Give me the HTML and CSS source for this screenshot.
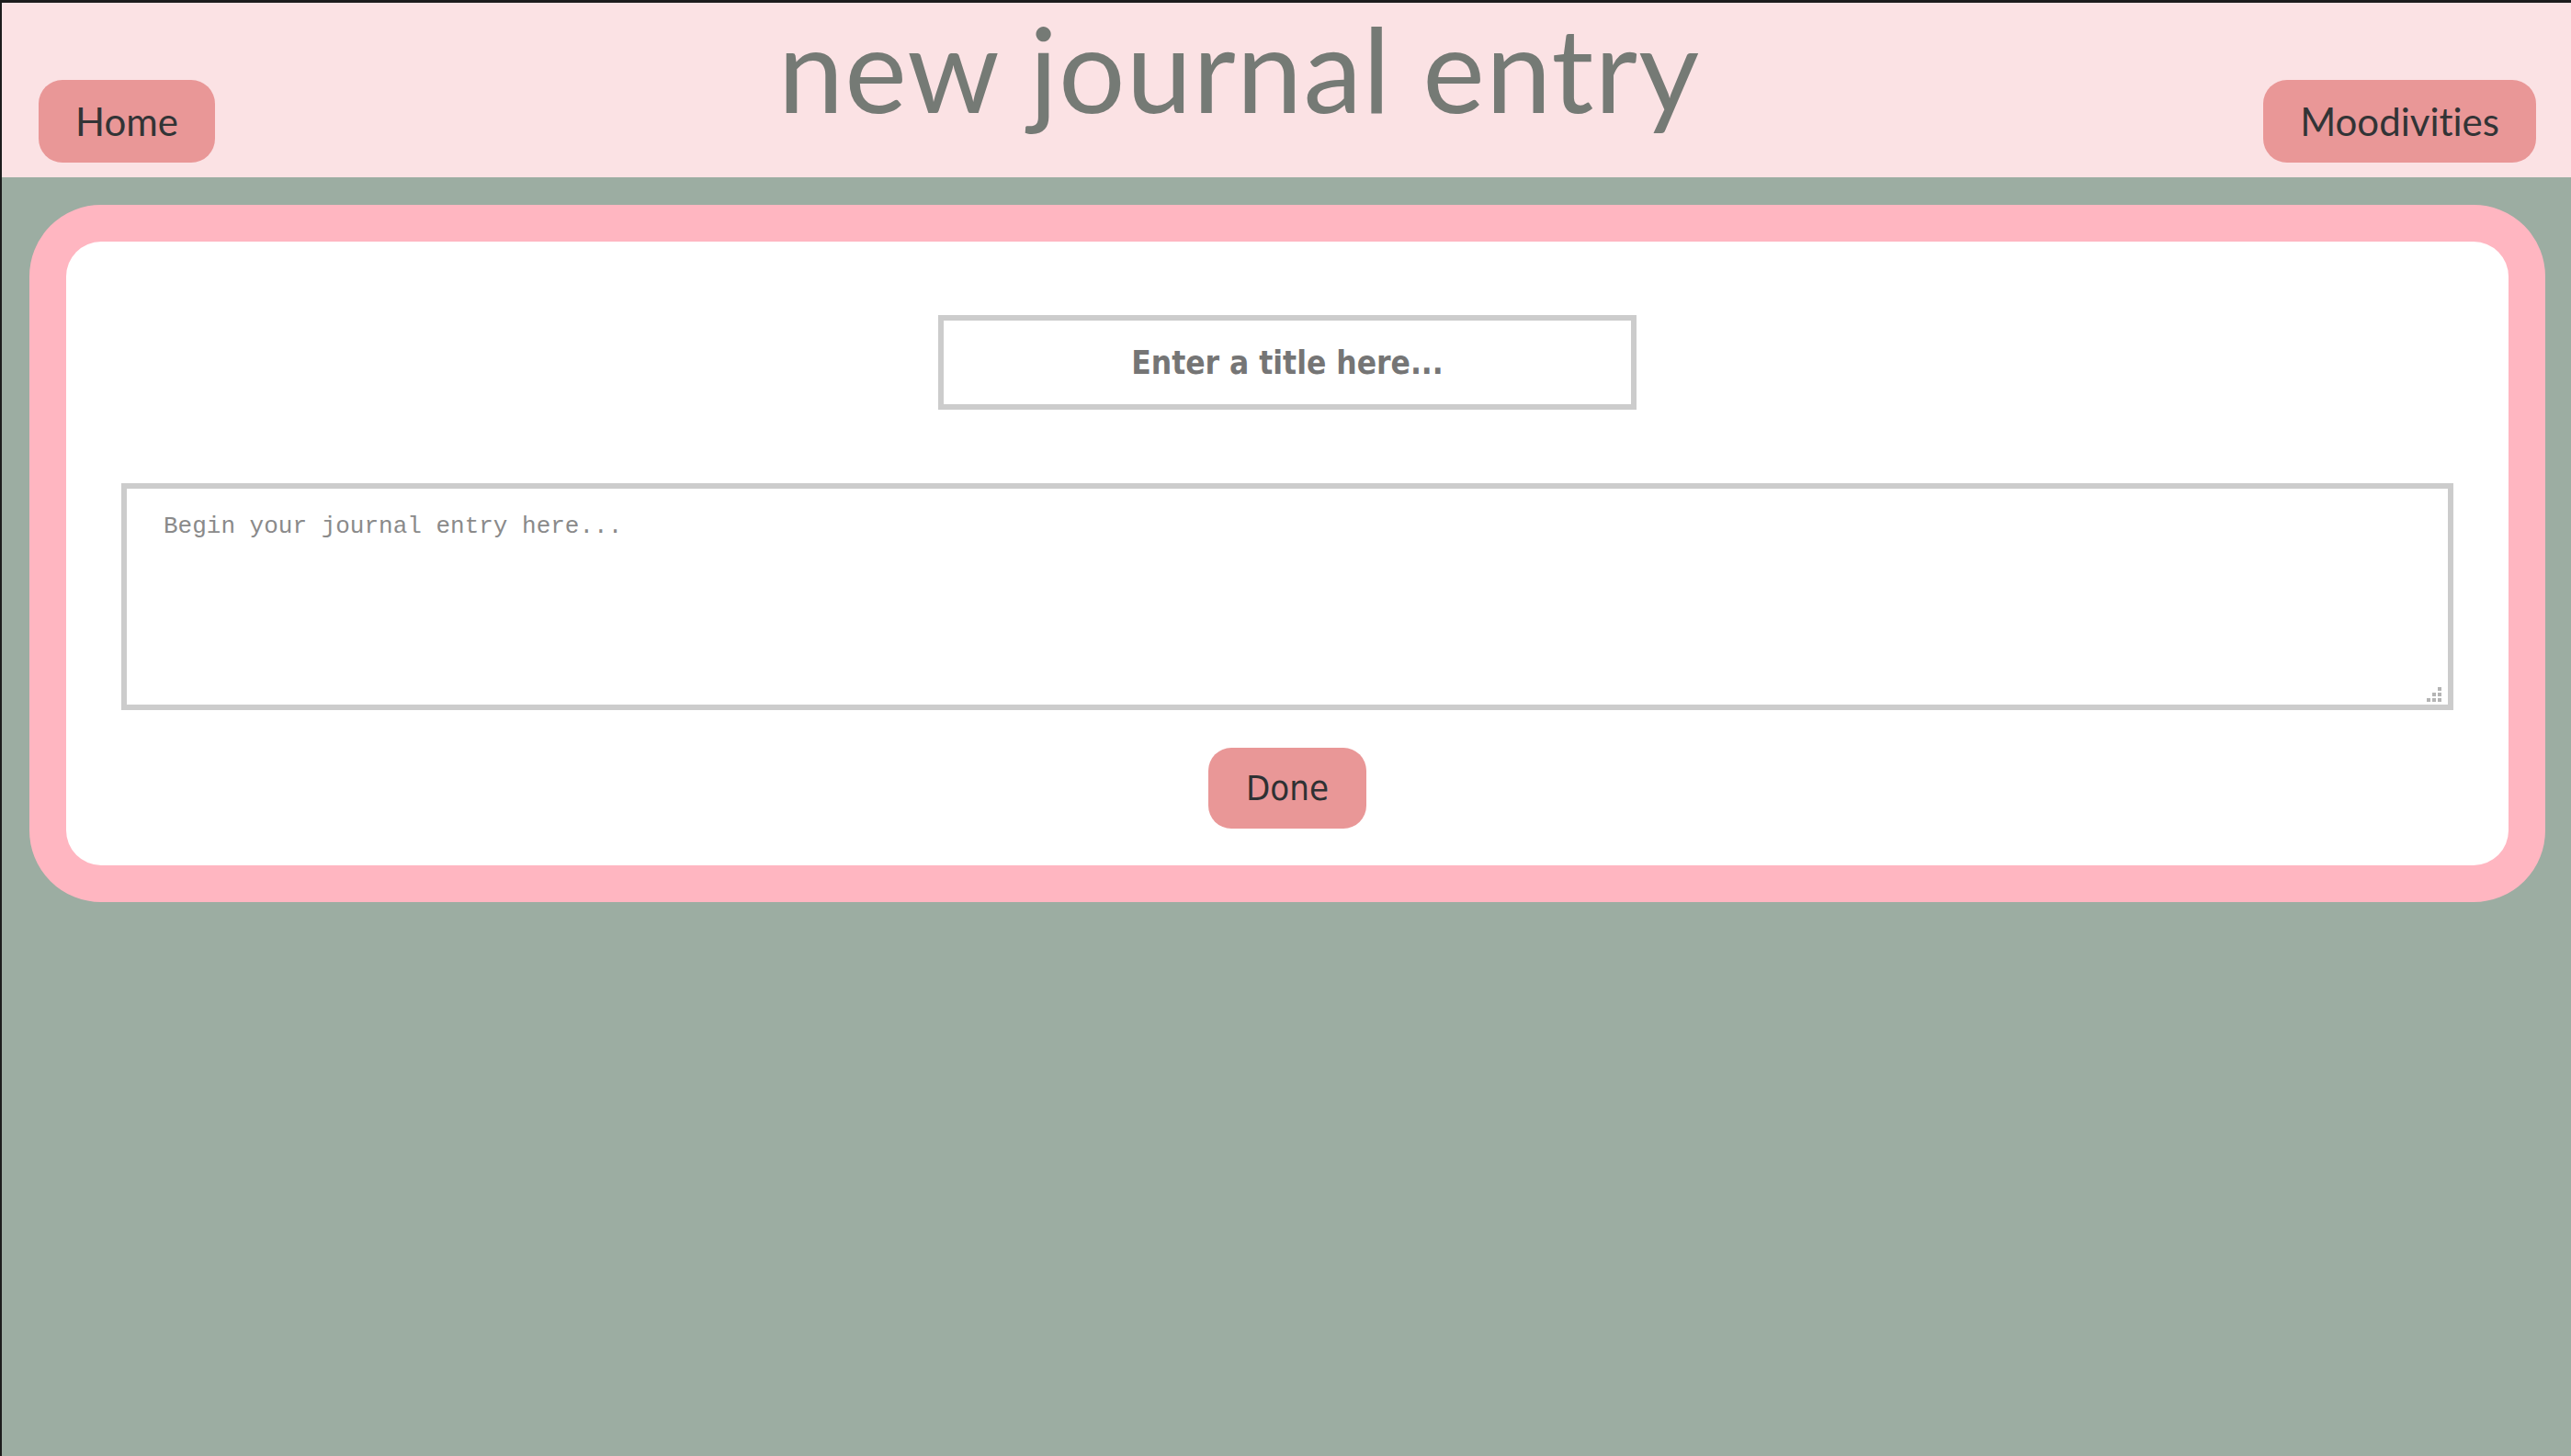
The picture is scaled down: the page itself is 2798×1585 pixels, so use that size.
FILE: index.html
```html
<!DOCTYPE html>
<html lang="en">
<head>
<meta charset="utf-8">
<title>new journal entry</title>
<link rel="stylesheet" href="styles.css">
</head>
<body>
<div class="page">
  <header class="topbar">
    <a class="nav-btn" href="#">Home</a>
    <h1 class="page-title">new journal entry</h1>
    <a class="nav-btn" href="#">Moodivities</a>
  </header>
  <main class="card">
    <div class="card-inner">
      <input class="title-input" type="text" placeholder="Enter a title here...">
      <div class="entry-wrap">
        <textarea class="entry" placeholder="Begin your journal entry here..."></textarea>
        <svg class="grip" width="16" height="16" viewBox="0 0 16 16" aria-hidden="true">
          <rect x="12" y="0" width="4" height="4" fill="#b4b4b4"/>
          <rect x="6" y="6" width="4" height="4" fill="#b4b4b4"/>
          <rect x="12" y="6" width="4" height="4" fill="#b4b4b4"/>
          <rect x="0" y="12" width="4" height="4" fill="#b4b4b4"/>
          <rect x="6" y="12" width="4" height="4" fill="#b4b4b4"/>
          <rect x="12" y="12" width="4" height="4" fill="#b4b4b4"/>
        </svg>
      </div>
      <button class="done-btn" type="button">Done</button>
    </div>
  </main>
</div>
</body>
</html>
```

FILE: styles.css
```css
html {
  margin: 0;
  padding: 0;
  overflow: hidden;
  background: #1c1c1c;
}

body {
  margin: 3px 0 0 2px;
  padding: 0;
  width: 2798px;
  min-height: 1600px;
  background: #9cada2;
  font-family: "Lato", "Liberation Sans", sans-serif;
}

.page {
  display: flex;
  flex-direction: column;
}

.topbar {
  height: 190px;
  box-sizing: border-box;
  padding: 0 40px;
  background: #fbe2e4;
  display: flex;
  justify-content: space-between;
  align-items: flex-start;
}

.nav-btn {
  margin-top: 84px;
  height: 90px;
  padding: 0 40px;
  box-sizing: border-box;
  display: flex;
  align-items: center;
  background: #e99797;
  border-radius: 26px;
  color: #323436;
  font-family: "Lato", "Liberation Sans", sans-serif;
  font-size: 42px;
  font-variant-ligatures: none;
  text-decoration: none;
}

.page-title {
  margin: 7px 0 0 0;
  font-family: "Lato", "Liberation Sans", sans-serif;
  font-weight: 400;
  font-size: 128px;
  line-height: 1;
  letter-spacing: 1.1px;
  color: #757a75;
}

.card {
  margin: 30px 30px 0 30px;
  border: 40px solid #ffb6c1;
  border-radius: 78px;
  background: #ffb6c1;
}

.card-inner {
  background: #ffffff;
  border-radius: 38px;
  padding: 80px 60px 40px 60px;
  display: flex;
  flex-direction: column;
  align-items: center;
}

.title-input {
  width: 760px;
  height: 103px;
  box-sizing: border-box;
  border: 6px solid #cccccc;
  outline: none;
  margin: 0;
  padding: 0 10px;
  text-align: center;
  font-family: "DejaVu Sans Condensed", "DejaVu Sans", sans-serif;
  font-stretch: condensed;
  font-weight: bold;
  font-size: 35px;
  color: #757575;
  background: #fff;
}

.title-input::placeholder {
  color: #757575;
}

.entry-wrap {
  position: relative;
  margin-top: 80px;
  width: 100%;
  height: 247px;
}

.entry {
  display: block;
  margin: 0;
  width: 100%;
  height: 100%;
  box-sizing: border-box;
  border: 6px solid #cccccc;
  outline: none;
  padding: 26px 40px;
  font-family: "Liberation Mono", monospace;
  font-size: 26px;
  color: #333;
  background: #fff;
  resize: none;
}

.entry::placeholder {
  color: #8a8a8a;
}

.grip {
  position: absolute;
  right: 13px;
  bottom: 9px;
  display: block;
}

.done-btn {
  margin-top: 41px;
  height: 88px;
  padding: 0 41px;
  border: none;
  border-radius: 25px;
  background: #e99797;
  color: #2f3133;
  font-family: "DejaVu Sans Condensed", "DejaVu Sans", sans-serif;
  font-stretch: condensed;
  font-size: 38px;
  cursor: pointer;
}
```
